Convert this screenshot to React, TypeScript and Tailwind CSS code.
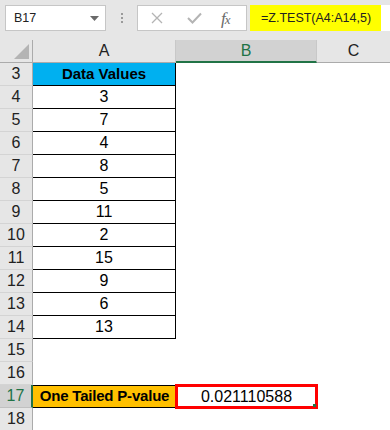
import React from "react";

const rows: { n: number; a?: string; kind?: "head" | "data" | "result" }[] = [
  { n: 3, a: "Data Values", kind: "head" },
  { n: 4, a: "3", kind: "data" },
  { n: 5, a: "7", kind: "data" },
  { n: 6, a: "4", kind: "data" },
  { n: 7, a: "8", kind: "data" },
  { n: 8, a: "5", kind: "data" },
  { n: 9, a: "11", kind: "data" },
  { n: 10, a: "2", kind: "data" },
  { n: 11, a: "15", kind: "data" },
  { n: 12, a: "9", kind: "data" },
  { n: 13, a: "6", kind: "data" },
  { n: 14, a: "13", kind: "data" },
  { n: 15 },
  { n: 16 },
  { n: 17, a: "One Tailed P-value", kind: "result" },
  { n: 18 },
];

function RowHeader({ n, selected }: { n: number; selected?: boolean }) {
  if (selected) {
    return (
      <div className="w-[33px] h-full shrink-0 bg-[#d2d2d2] border-b border-[#c0c0c0] border-r-2 border-r-[#217346] flex items-center justify-center text-[16px] text-[#217346] box-border">
        {n}
      </div>
    );
  }
  return (
    <div className="w-[33px] h-full shrink-0 bg-[#e6e6e6] border-b border-[#d4d4d4] border-r border-r-[#ababab] flex items-center justify-center text-[16px] text-[#222] box-border">
      {n}
    </div>
  );
}

export default function App() {
  return (
    <div className="w-[390px] h-[430px] overflow-hidden bg-white font-['Liberation_Sans',Arial,sans-serif] text-black">
      {/* Formula bar */}
      <div className="h-[40px] bg-[#e6e6e6] flex items-start pt-[5px] pl-[5px]">
        <div className="w-[101px] h-[26px] bg-white border border-[#c6c6c6] flex items-center justify-between pl-[8px] pr-[6px] box-border">
          <span className="text-[12.5px] text-[#222]">B17</span>
          <svg width="9" height="5" viewBox="0 0 9 5">
            <path d="M0 0 L9 0 L4.5 5 Z" fill="#6a6a6a" />
          </svg>
        </div>
        <div className="w-[31px] h-[26px] flex flex-col items-center justify-center gap-[2px]">
          <div className="w-[2px] h-[2px] bg-[#9a9a9a]" />
          <div className="w-[2px] h-[2px] bg-[#9a9a9a]" />
          <div className="w-[2px] h-[2px] bg-[#9a9a9a]" />
        </div>
        <div className="w-[110px] h-[26px] bg-white border border-[#c6c6c6] flex items-center box-border">
          <svg className="ml-[13px]" width="12" height="12" viewBox="0 0 12 12">
            <path d="M1 1 L11 11 M11 1 L1 11" stroke="#b4b4b4" strokeWidth="1.3" />
          </svg>
          <svg className="ml-[24px]" width="15" height="12" viewBox="0 0 15 12">
            <path d="M1 6 L5.5 10.5 L14 1.5" stroke="#b4b4b4" strokeWidth="2" fill="none" />
          </svg>
          <span className="ml-[19px] text-[17px] italic text-[#6a6a6a] font-['Liberation_Serif',serif] tracking-[-1px] leading-none">
            f<span className="text-[13px]">x</span>
          </span>
        </div>
        <div className="ml-[3px] flex-1 h-[26px] bg-white flex items-stretch">
          <div className="w-[131px] bg-[#ffff00] flex items-center pl-[11px] text-[12.5px] text-[#222] whitespace-nowrap">
            =Z.TEST(A4:A14,5)
          </div>
          <div className="flex-1 bg-white" />
        </div>
      </div>

      {/* Column headers */}
      <div className="h-[23px] flex">
        <div className="w-[33px] h-full shrink-0 bg-[#e6e6e6] border-r border-b border-[#ababab] flex items-end justify-end pr-[3px] pb-[3px] box-border">
          <svg width="15" height="15" viewBox="0 0 15 15">
            <path d="M15 0 L15 15 L0 15 Z" fill="#b4b4b4" />
          </svg>
        </div>
        <div className="w-[143px] h-full shrink-0 bg-[#e6e6e6] border-r border-b border-r-[#c8c8c8] border-b-[#ababab] flex items-center justify-center text-[16px] text-[#222] box-border">
          A
        </div>
        <div className="w-[141px] h-full shrink-0 bg-[#d2d2d2] border-r border-r-[#c8c8c8] border-b-2 border-b-[#217346] flex items-center justify-center text-[16px] text-[#217346] box-border">
          B
        </div>
        <div className="flex-1 h-full bg-[#e6e6e6] border-b border-[#ababab] flex items-center justify-center text-[16px] text-[#222] box-border">
          C
        </div>
      </div>

      {/* Rows */}
      {rows.map((r) => (
        <div key={r.n} className="h-[23px] flex">
          <RowHeader n={r.n} selected={r.n === 17} />
          {r.kind === "head" && (
            <div className="w-[143px] h-full shrink-0 bg-[#00b0f0] border-r border-b border-black flex items-center justify-center text-[15px] font-bold box-border">
              {r.a}
            </div>
          )}
          {r.kind === "data" && (
            <div className="w-[143px] h-full shrink-0 bg-white border-r border-b border-black flex items-center justify-center text-[16px] box-border">
              {r.a}
            </div>
          )}
          {r.kind === "result" && (
            <div className="w-[143px] h-full shrink-0 bg-[#ffc000] border-t border-b border-black flex items-center justify-center text-[15px] font-bold whitespace-nowrap box-border tracking-[-0.2px]">
              {r.a}
            </div>
          )}
          {!r.kind && <div className="w-[143px] h-full shrink-0 bg-white" />}
          {r.kind === "result" ? (
            <div className="relative w-[141px] h-full shrink-0 bg-white flex items-center justify-center text-[16px]">
              0.021110588
              <div className="absolute -left-[1px] -top-[1px] -right-[1px] -bottom-[1px] border-[3px] border-[#ff0000]" />
              <div className="absolute right-[1px] bottom-[1px] w-[3px] h-[3px] bg-[#217346]" />
            </div>
          ) : (
            <div className="w-[141px] h-full shrink-0 bg-white" />
          )}
          <div className="flex-1 h-full bg-white" />
        </div>
      ))}
    </div>
  );
}
